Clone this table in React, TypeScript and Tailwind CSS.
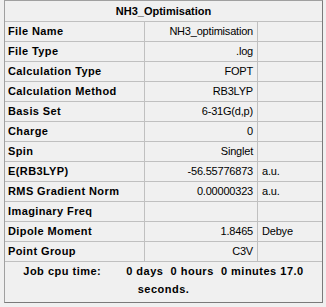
import React from 'react'

interface Row {
  label: string
  value: string
  unit?: string
}

const rows: Row[] = [
  { label: 'File Name', value: 'NH3_optimisation' },
  { label: 'File Type', value: '.log' },
  { label: 'Calculation Type', value: 'FOPT' },
  { label: 'Calculation Method', value: 'RB3LYP' },
  { label: 'Basis Set', value: '6-31G(d,p)' },
  { label: 'Charge', value: '0' },
  { label: 'Spin', value: 'Singlet' },
  { label: 'E(RB3LYP)', value: '-56.55776873', unit: 'a.u.' },
  { label: 'RMS Gradient Norm', value: '0.00000323', unit: 'a.u.' },
  { label: 'Imaginary Freq', value: '' },
  { label: 'Dipole Moment', value: '1.8465', unit: 'Debye' },
  { label: 'Point Group', value: 'C3V' },
]

export default function App() {
  return (
    <div
      className="w-[326px] h-[307px] bg-[#f0f0f0] pl-[4px] text-[11px] leading-none text-black"
      style={{ fontFamily: '"Liberation Sans", Arial, sans-serif' }}
    >
      <div className="w-[319px] h-[303px] flex flex-col border border-[#a0a0a0] border-r-[#7a7a7a] border-b-[#7a7a7a]">
        <div className="h-[21px] flex items-center justify-center font-bold border-b border-[#c0c0c0]">
          NH3_Optimisation
        </div>
        {rows.map(r => (
          <div key={r.label} className="h-[20px] flex border-b border-[#c0c0c0]">
            <div className="w-[140px] border-r border-[#c0c0c0] flex items-center pl-[3px] font-bold tracking-[0.4px]">
              {r.label}
            </div>
            <div className="w-[113px] border-r border-[#c0c0c0] flex items-center justify-end pr-[4px] tracking-[-0.2px]">
              {r.value}
            </div>
            <div className="flex-1 flex items-center pl-[4px] tracking-[-0.2px]">{r.unit}</div>
          </div>
        ))}
        <div className="flex-1 flex flex-col items-center font-bold leading-[18px] tracking-[0.5px]">
          <div className="whitespace-pre">Job cpu time:       0 days  0 hours  0 minutes 17.0</div>
          <div>seconds.</div>
        </div>
      </div>
    </div>
  )
}
